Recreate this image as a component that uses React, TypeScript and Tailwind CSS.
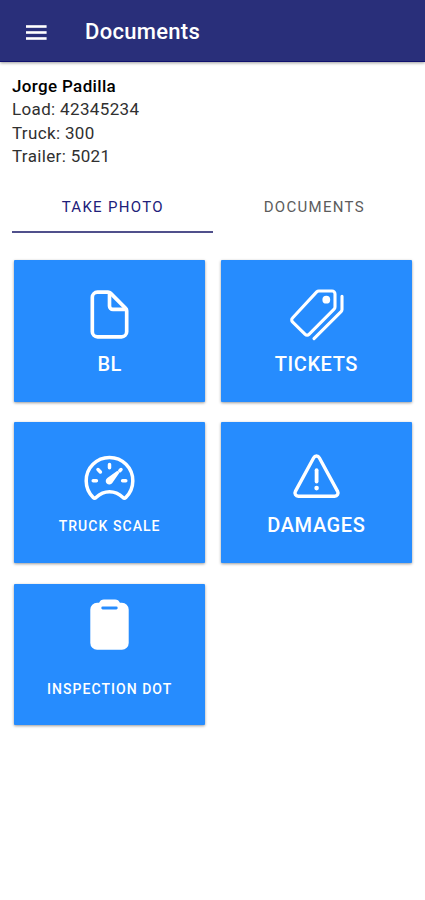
import type { ReactNode } from "react"

function MenuIcon() {
  return (
    <svg viewBox="0 0 21 15" className="h-[15px] w-[21px]" fill="currentColor">
      <rect x="0" y="0.2" width="20.6" height="2.6" />
      <rect x="0" y="6.2" width="20.6" height="2.6" />
      <rect x="0" y="12.2" width="20.6" height="2.6" />
    </svg>
  )
}

function DocumentIcon() {
  return (
    <svg viewBox="0 0 512 512" className="size-[55px]" fill="none" stroke="currentColor" strokeWidth="34" strokeLinejoin="round" strokeLinecap="round">
      <path d="M416 221.25V416a48 48 0 0 1-48 48H144a48 48 0 0 1-48-48V96a48 48 0 0 1 48-48h98.75a32 32 0 0 1 22.62 9.37l141.26 141.26a32 32 0 0 1 9.37 22.62z" />
      <path d="M256 56v120a32 32 0 0 0 32 32h120" />
    </svg>
  )
}

function TicketsIcon() {
  return (
    <svg viewBox="0 0 55 55" className="size-[55px]" fill="none" stroke="currentColor" strokeWidth="3.1" strokeLinejoin="round" strokeLinecap="round">
      <path d="M29.8 4H43a3 3 0 0 1 3 3V20a3 3 0 0 1-.9 2.1L20 47.3a2.7 2.7 0 0 1-3.8 0L3.5 34.8a2.7 2.7 0 0 1 0-3.8L27.7 4.9A3 3 0 0 1 29.8 4z" />
      <path d="M53 9.2v13.4a3 3 0 0 1-.9 2.1L25 51.6" />
      <circle cx="37.3" cy="12.7" r="3.9" fill="currentColor" stroke="none" />
    </svg>
  )
}

function ScaleIcon() {
  return (
    <svg viewBox="0 0 55 55" className="size-[55px]" fill="none" stroke="currentColor" strokeWidth="3.5" strokeLinejoin="round" strokeLinecap="round">
      <path d="M14 44.6c-.9.7-2 .6-2.8-.2A23.3 23.3 0 1 1 43.8 44.4c-.8.8-1.9.9-2.8.2-3.4-3.2-8.1-5.8-13.5-5.8s-10.1 2.6-13.5 5.8z" />
      <path d="M27.5 11.6v3.2M11.2 27.8h3.2M40.6 27.8h3.2M16 16.5l2.4 2.4M39 16.5l-1.2 1.2" />
      <path d="M35.4 17.8l2 2-7.1 10.2a3.6 3.6 0 1 1-5-5z" fill="currentColor" stroke="none" />
    </svg>
  )
}

function WarningIcon() {
  return (
    <svg viewBox="0 0 55 55" className="size-[55px]" fill="none" stroke="currentColor" strokeWidth="3.4" strokeLinejoin="round" strokeLinecap="round">
      <path d="M24.7 4.7 6.4 38.4a3.3 3.3 0 0 0 2.9 4.9h36.4a3.3 3.3 0 0 0 2.9-4.9L30.3 4.7a3.2 3.2 0 0 0-5.6 0z" />
      <path d="M27.6 17.2v11.4" strokeWidth="3.8" />
      <circle cx="27.6" cy="35.1" r="2.3" fill="currentColor" stroke="none" />
    </svg>
  )
}

function ClipboardIcon() {
  return (
    <svg viewBox="0 0 55 55" className="size-[55px]" fill="currentColor">
      <path
        fillRule="evenodd"
        d="M22 1.4h11a5.2 5.2 0 0 1 4.9 3.4h2a6.8 6.8 0 0 1 6.8 6.8v33.4a6.8 6.8 0 0 1-6.8 6.8H15.1a6.8 6.8 0 0 1-6.8-6.8V11.6a6.8 6.8 0 0 1 6.8-6.8h2A5.2 5.2 0 0 1 22 1.4zM20.7 8.6a1.4 1.4 0 0 0 0 2.8h13.6a1.4 1.4 0 0 0 0-2.8z"
      />
    </svg>
  )
}

interface PhotoButtonProps {
  icon: ReactNode
  label: string
  className: string
}

function PhotoButton({ icon, label, className }: PhotoButtonProps) {
  return (
    <button className={`flex h-[141.5px] flex-col items-center rounded-[1px] bg-[#268cfe] font-medium text-white shadow-[0_1px_3px_rgba(0,0,0,0.4)] ${className}`}>
      {icon}
      <span className="whitespace-nowrap">{label}</span>
    </button>
  )
}

export default function App() {
  return (
    <div className="min-h-screen bg-white font-['Roboto',sans-serif]">
      {/* Toolbar */}
      <header className="flex h-[62px] items-center border-b border-[#10106e] bg-[#292f7a] pt-[3px] pl-[25.5px] text-white shadow-[0_1px_3px_rgba(0,0,0,0.4)]">
        <button aria-label="Menu">
          <MenuIcon />
        </button>
        <h1 className="ml-[38.5px] text-[22px] leading-7 font-medium tracking-[0.3px]">Documents</h1>
      </header>

      <main className="px-3 pt-[13px]">
        {/* Driver details */}
        <section className="text-[17px] leading-[23.3px] tracking-[0.35px] text-[#303030]">
          <p className="font-medium text-black">Jorge Padilla</p>
          <p>Load: 42345234</p>
          <p>Truck: 300</p>
          <p>Trailer: 5021</p>
        </section>

        {/* Tabs */}
        <nav className="mt-[13px] grid h-[52px] grid-cols-2 text-[15px] tracking-[1.3px]">
          <button className="border-b-2 border-[#50508c] pt-0.5 pl-px text-[#20207a]">TAKE PHOTO</button>
          <button className="border-b-2 border-transparent pt-0.5 pl-[3px] text-[#5c5c5c]">DOCUMENTS</button>
        </nav>

        {/* Photo types */}
        <section className="mt-[27px] grid grid-cols-2 gap-x-[15.5px] gap-y-[20.3px] pr-px pl-0.5">
          <PhotoButton icon={<DocumentIcon />} label="BL" className="pt-[26.5px] text-[20px] leading-[45px] tracking-[0.5px]" />
          <PhotoButton icon={<TicketsIcon />} label="TICKETS" className="pt-[26.5px] text-[20px] leading-[45px] tracking-[0.6px]" />
          <PhotoButton icon={<ScaleIcon />} label="TRUCK SCALE" className="pt-[31.5px] text-[14px] leading-[37px] tracking-[1.05px]" />
          <PhotoButton icon={<WarningIcon />} label="DAMAGES" className="pt-[31.5px] text-[20px] leading-[35px] tracking-[0.6px]" />
          <PhotoButton icon={<ClipboardIcon />} label="INSPECTION DOT" className="pt-[14px] text-[14px] leading-[72px] tracking-[1.05px]" />
        </section>
      </main>
    </div>
  )
}
